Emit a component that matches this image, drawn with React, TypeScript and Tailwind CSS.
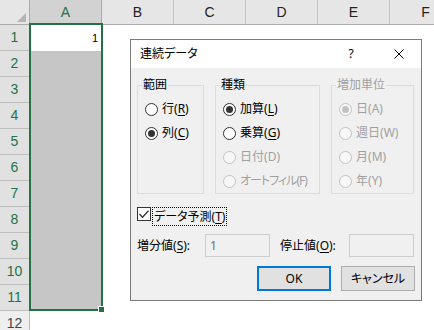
import React from "react";

const cols = ["B", "C", "D", "E", "F"];
const rows = Array.from({ length: 12 }, (_, i) => i + 1);

function Sheet() {
  return (
    <div className="flex flex-col">
      {/* column headers */}
      <div className="flex h-[25px] shrink-0 bg-[#e6e6e6] border-b border-[#ababab] text-[14px] text-[#222]">
        <div className="w-[30px] shrink-0 border-r border-[#ababab] flex items-end justify-end pr-[3px] pb-[2px]">
          <svg width="9" height="9" viewBox="0 0 9 9">
            <polygon points="9,0 9,9 0,9" fill="#b4b4b4" />
          </svg>
        </div>
        <div className="w-[72px] shrink-0 bg-[#d2d2d2] border-r border-[#ababab] text-[#217346] flex items-center justify-center">
          A
        </div>
        {cols.map((c) => (
          <div
            key={c}
            className="w-[72px] shrink-0 border-r border-[#c3c3c3] flex items-center justify-center"
          >
            {c}
          </div>
        ))}
      </div>

      {/* rows */}
      {rows.map((r) => (
        <div key={r} className="flex h-[26px] shrink-0">
          <div
            className={
              r <= 11
                ? "w-[30px] shrink-0 border-r border-b border-[#bdbdbd] bg-[#e1e1e1] text-[#217346] flex items-center justify-center text-[14px]"
                : "w-[30px] shrink-0 border-r border-b border-[#bdbdbd] bg-[#efefef] text-[#444] flex items-center justify-center text-[14px]"
            }
          >
            {r}
          </div>
          <div
            className={
              r >= 2 && r <= 11
                ? "w-[72px] shrink-0 bg-[#c6c6c6]"
                : "w-[72px] shrink-0 flex items-center justify-end pr-[4px] text-[11px] text-black"
            }
          >
            {r === 1 ? "1" : ""}
          </div>
        </div>
      ))}
    </div>
  );
}

function Mn({ k, off }: { k: string; off?: boolean }) {
  return (
    <>
      (<span className={off ? "" : "underline underline-offset-2"}>{k}</span>)
    </>
  );
}

function Radio({
  label,
  k,
  checked,
  disabled,
  tight,
}: {
  label: string;
  k: string;
  checked?: boolean;
  disabled?: boolean;
  tight?: boolean;
}) {
  return (
    <div className="flex items-center h-[24px] gap-[4px]">
      <span
        className={
          disabled
            ? "w-[13px] h-[13px] shrink-0 rounded-full border border-[#c2c2c2] bg-[#f7f7f7] flex items-center justify-center"
            : "w-[13px] h-[13px] shrink-0 rounded-full border border-[#333] bg-white flex items-center justify-center"
        }
      >
        {checked && (
          <span
            className={
              disabled
                ? "w-[7px] h-[7px] rounded-full bg-[#c2c2c2]"
                : "w-[7px] h-[7px] rounded-full bg-[#333]"
            }
          />
        )}
      </span>
      <span
        className={
          (disabled ? "text-[#a0a0a0] whitespace-nowrap" : "text-black whitespace-nowrap") +
          (tight ? " tracking-[-1px]" : "")
        }
      >
        {label}
        <Mn k={k} off={disabled} />
      </span>
    </div>
  );
}

function Group({
  title,
  width,
  disabled,
  children,
}: {
  title: string;
  width: string;
  disabled?: boolean;
  children: React.ReactNode;
}) {
  return (
    <fieldset className={`${width} shrink-0 border border-[#dcdcdc] pl-[7px] pt-[4px] min-w-0`}>
      <legend
        className={
          disabled
            ? "-ml-[3px] px-[1px] leading-[16px] text-[#a0a0a0]"
            : "-ml-[3px] px-[1px] leading-[16px] text-black"
        }
      >
        {title}
      </legend>
      {children}
    </fieldset>
  );
}

function Dialog() {
  return (
    <div className="absolute left-[130px] top-[39px] w-[292px] h-[262px] border border-[#7a7a7a] bg-[#f0f0f0] flex flex-col font-['Noto_Sans','Noto_Sans_CJK_JP',sans-serif] [font-feature-settings:'palt'] text-[12px] leading-[16px]">
      {/* title bar */}
      <div className="h-[28px] shrink-0 bg-white flex items-center pl-[9px] pr-[12px]">
        <span className="text-black">連続データ</span>
        <span className="ml-auto w-[20px] text-center text-black">?</span>
        <span className="ml-[28px] w-[20px] flex items-center justify-center">
          <svg width="10" height="10" viewBox="0 0 10 10">
            <path d="M0.5 0.5 L9.5 9.5 M9.5 0.5 L0.5 9.5" stroke="#000" strokeWidth="1" />
          </svg>
        </span>
      </div>

      {/* body */}
      <div className="flex flex-col px-[6px]">
        <div className="flex gap-[11px] mt-[9px]">
          <Group title="範囲" width="w-[67px]">
            <Radio label="行" k="R" />
            <Radio label="列" k="C" checked />
          </Group>
          <Group title="種類" width="w-[105px]">
            <Radio label="加算" k="L" checked />
            <Radio label="乗算" k="G" />
            <Radio label="日付" k="D" disabled />
            <Radio label="オートフィル" k="F" disabled tight />
          </Group>
          <Group title="増加単位" width="w-[83px]" disabled>
            <Radio label="日" k="A" checked disabled />
            <Radio label="週日" k="W" disabled />
            <Radio label="月" k="M" disabled />
            <Radio label="年" k="Y" disabled />
          </Group>
        </div>

        {/* trend checkbox */}
        <div className="flex items-start mt-[13px] h-[19px]">
          <span className="w-[14px] h-[14px] shrink-0 border border-[#333] bg-white flex items-center justify-center">
            <svg width="12" height="12" viewBox="0 0 12 12">
              <polyline points="1.5,6 4.5,9.2 10.5,2.8" fill="none" stroke="#333" strokeWidth="1.3" />
            </svg>
          </span>
          <span className="ml-[1px] h-[19px] px-[1px] border border-dotted border-black flex items-center whitespace-nowrap">
            データ予測
            <Mn k="T" />
          </span>
        </div>

        {/* step / stop values */}
        <div className="flex items-center mt-[8px] h-[23px]">
          <span className="w-[68px] shrink-0 whitespace-nowrap">
            増分値
            <Mn k="S" />:
          </span>
          <div className="w-[65px] h-[23px] shrink-0 border border-[#cccccc] bg-[#f0f0f0] flex items-center pl-[4px] text-[#6d6d6d]">
            1
          </div>
          <span className="ml-[10px] w-[69px] shrink-0 whitespace-nowrap">
            停止値
            <Mn k="O" />:
          </span>
          <div className="w-[65px] h-[23px] shrink-0 border border-[#cccccc] bg-[#f0f0f0]" />
        </div>

        {/* buttons */}
        <div className="flex justify-end gap-[10px] mt-[9px]">
          <button className="w-[74px] h-[25px] border-2 border-[#0078d7] bg-[#e1e1e1] text-black">
            OK
          </button>
          <button className="w-[74px] h-[25px] border border-[#adadad] bg-[#e1e1e1] text-black">
            キャンセル
          </button>
        </div>
      </div>
    </div>
  );
}

export default function App() {
  return (
    <div className="relative w-[434px] h-[330px] overflow-hidden bg-white font-['Liberation_Sans',sans-serif]">
      <Sheet />
      {/* selection outline + fill handle */}
      <div className="absolute left-[29px] top-[23px] w-[74px] h-[288px] border-2 border-[#217346]" />
      <div className="absolute left-[98px] top-[306px] w-[7px] h-[7px] bg-[#217346] border border-white" />
      <Dialog />
    </div>
  );
}
